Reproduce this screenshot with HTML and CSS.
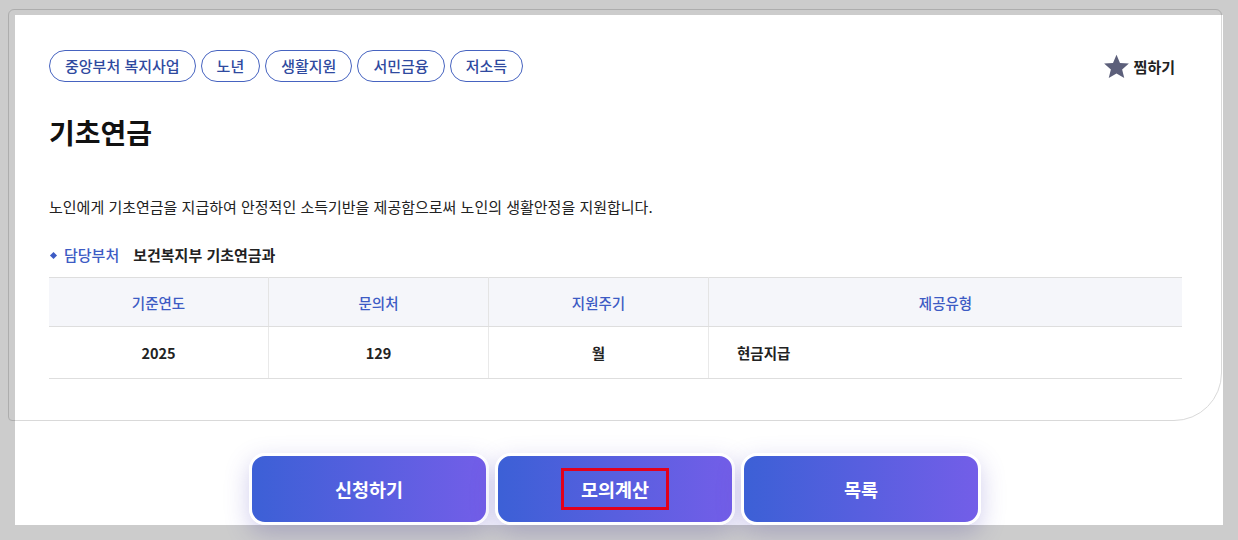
FILE: index.html
```html
<!DOCTYPE html>
<html lang="ko">
<head>
  <meta charset="UTF-8">
  <meta name="viewport" content="width=device-width, initial-scale=1.0">
  <title>기초연금</title>
  <link rel="stylesheet" href="styles.css">
</head>
<body>
  <div class="page">
    <div class="card">
      <div class="card-top">
        <div class="tags">
          <span class="tag">중앙부처 복지사업</span>
          <span class="tag">노년</span>
          <span class="tag">생활지원</span>
          <span class="tag">서민금융</span>
          <span class="tag">저소득</span>
        </div>
        <div class="fav">
          <svg width="27" height="27" viewBox="0 0 24 24"><path d="M12 1.5l3.1 7.3 7.9.6-6 5.2 1.9 7.7L12 18.2l-6.9 4.1 1.9-7.7-6-5.2 7.9-.6z" fill="#5c5f7a"/></svg>
          <span>찜하기</span>
        </div>
      </div>
      <h1 class="title">기초연금</h1>
      <p class="desc">노인에게 기초연금을 지급하여 안정적인 소득기반을 제공함으로써 노인의 생활안정을 지원합니다.</p>
      <div class="dept">
        <span class="bullet"></span>
        <span class="dept-label">담당부처</span>
        <span class="dept-name">보건복지부 기초연금과</span>
      </div>
      <table class="info">
        <thead>
          <tr>
            <th class="col">기준연도</th>
            <th class="col">문의처</th>
            <th class="col">지원주기</th>
            <th>제공유형</th>
          </tr>
        </thead>
        <tbody>
          <tr>
            <td>2025</td>
            <td>129</td>
            <td>월</td>
            <td class="left">현금지급</td>
          </tr>
        </tbody>
      </table>
    </div>

    <div class="actions">
      <button class="btn">신청하기</button>
      <button class="btn"><span class="mark">모의계산</span></button>
      <button class="btn">목록</button>
    </div>
  </div>

  <!-- tutorial spotlight -->
  <div class="spotlight"></div>
</body>
</html>
```

FILE: styles.css
```css
html, body {
  margin: 0;
  height: 100%;
}
body {
  position: relative;
  overflow: hidden;
  background-color: #fff;
  font-family: "Noto Sans CJK KR", "Noto Sans", sans-serif;
  color: #222;
}
.page {
  padding: 9px 16px 0 8px;
}
.card {
  border: 1px solid #d9d9d9;
  border-radius: 6px 6px 48px 4px;
  padding: 40px 39px 41px 40px;
  background-color: #fff;
}
.card-top {
  display: flex;
  justify-content: space-between;
  align-items: center;
}
.tags {
  display: flex;
  gap: 5px;
}
.tag {
  border: 1px solid #4663c0;
  border-radius: 16px;
  padding: 5px 15px;
  font-size: 15px;
  line-height: 20px;
  font-weight: 500;
  color: #2f4a9f;
}
.fav {
  display: flex;
  align-items: center;
  gap: 4px;
  margin-right: 7px;
  font-size: 15px;
  font-weight: 700;
  color: #222;
}
.title {
  margin: 32px 0 0;
  font-size: 28px;
  line-height: 36px;
  font-weight: 700;
  color: #111;
}
.desc {
  margin: 46px 0 0;
  font-size: 15px;
  line-height: 22px;
}
.dept {
  display: flex;
  align-items: center;
  margin-top: 26px;
  font-size: 15px;
  line-height: 22px;
}
.bullet {
  width: 5px;
  height: 5px;
  margin: 0 8px 0 2px;
  background-color: #3d5bc4;
  transform: rotate(45deg);
}
.dept-label {
  color: #3d5bc4;
  font-weight: 500;
  margin-right: 14px;
}
.dept-name {
  font-weight: 700;
}
.info {
  width: 100%;
  margin-top: 11px;
  border-collapse: collapse;
  border-top: 1px solid #dedede;
  font-size: 14.5px;
}
.info th {
  height: 48px;
  padding: 0;
  background-color: #f5f6fa;
  color: #3d5bc4;
  font-weight: 500;
  border-bottom: 1px solid #dedede;
  border-left: 1px solid #e4e4e4;
}
.info td {
  height: 51px;
  padding: 0;
  text-align: center;
  font-weight: 700;
  border-bottom: 1px solid #dedede;
  border-left: 1px solid #e9e9e9;
}
.info th:first-child,
.info td:first-child {
  border-left: none;
}
.info .col {
  width: 219px;
}
.info td.left {
  text-align: left;
  padding-left: 28px;
}
.actions {
  display: flex;
  justify-content: center;
  gap: 6px;
  margin-top: 32px;
}
.btn {
  width: 240px;
  height: 72px;
  border: 3px solid #fff;
  border-radius: 16px;
  background: linear-gradient(90deg, #3c60d6, #735ee8);
  color: #fff;
  font-family: inherit;
  font-size: 18.5px;
  font-weight: 700;
  box-shadow: 0 8px 24px rgba(85, 75, 190, 0.28);
  cursor: pointer;
}
.mark {
  display: inline-block;
  border: 3px solid #e3001b;
  padding: 6px 17px;
  line-height: 24px;
}
.spotlight {
  position: absolute;
  left: 15px;
  top: 15px;
  width: 1208px;
  height: 510px;
  box-shadow: 0 0 0 1600px rgba(0, 0, 0, 0.2);
  pointer-events: none;
}
```
